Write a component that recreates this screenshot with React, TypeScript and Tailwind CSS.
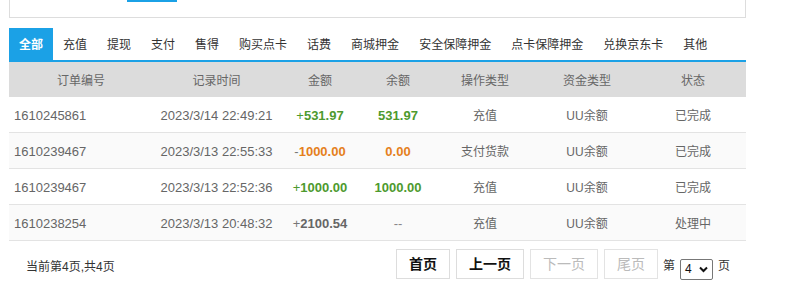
import React from "react";

type Row = {
  id: string;
  time: string;
  amount: string;
  balance: string;
  op: string;
  fund: string;
  status: string;
  tone: "up" | "down" | "none";
};

const tabs = ["全部", "充值", "提现", "支付", "售得", "购买点卡", "话费", "商城押金", "安全保障押金", "点卡保障押金", "兑换京东卡", "其他"];

const rows: Row[] = [
  { id: "1610245861", time: "2023/3/14 22:49:21", amount: "531.97", balance: "531.97", op: "充值", fund: "UU余额", status: "已完成", tone: "up" },
  { id: "1610239467", time: "2023/3/13 22:55:33", amount: "1000.00", balance: "0.00", op: "支付货款", fund: "UU余额", status: "已完成", tone: "down" },
  { id: "1610239467", time: "2023/3/13 22:52:36", amount: "1000.00", balance: "1000.00", op: "充值", fund: "UU余额", status: "已完成", tone: "up" },
  { id: "1610238254", time: "2023/3/13 20:48:32", amount: "2100.54", balance: "--", op: "充值", fund: "UU余额", status: "处理中", tone: "none" },
];

const cols = ["w-[144px]", "w-[127px]", "w-[80px]", "w-[76px]", "w-[98px]", "w-[106px]", "w-[106px]"];

function Amount({ r }: { r: Row }) {
  if (r.tone === "up")
    return (
      <span>
        <span className="text-[#4d9a2e]">+</span>
        <span className="font-bold text-[#4d9a2e]">{r.amount}</span>
      </span>
    );
  if (r.tone === "down")
    return (
      <span>
        <span className="text-[#777]">-</span>
        <span className="font-bold text-[#e5801c]">{r.amount}</span>
      </span>
    );
  return (
    <span>
      <span className="text-[#777]">+</span>
      <span className="font-bold text-[#666]">{r.amount}</span>
    </span>
  );
}

function Balance({ r }: { r: Row }) {
  if (r.tone === "up") return <span className="font-bold text-[#4d9a2e]">{r.balance}</span>;
  if (r.tone === "down") return <span className="font-bold text-[#e5801c]">{r.balance}</span>;
  return <span className="text-[#888]">{r.balance}</span>;
}

export default function App() {
  return (
    <div className="h-[300px] w-[798px] overflow-hidden bg-white font-['Liberation_Sans','Noto_Sans_CJK_SC',sans-serif]">
      <div className="ml-[9px] w-[737px]">
        {/* search box, only the bottom peeks in */}
        <div className="h-[18px] border-x border-b border-[#dddddd]">
          <div className="ml-[117px] h-[2px] w-[50px] bg-[#1ba1e6]" />
        </div>

        {/* tabs */}
        <div className="mt-[10px] flex h-[32px] items-stretch">
          {tabs.map((t, i) => (
            <div
              key={t}
              className={`flex items-center px-[10px] pt-[1px] text-[12px] ${i === 0 ? "bg-[#1ba1e6] font-bold text-white" : "text-[#333]"}`}
            >
              {t}
            </div>
          ))}
        </div>
        <div className="h-[2px] bg-[#1ba1e6]" />

        {/* table */}
        <div className="flex h-[35px] items-center bg-[#dcdcdc] pt-[2px] text-[12px] text-[#666]">
          {["订单编号", "记录时间", "金额", "余额", "操作类型", "资金类型", "状态"].map((h, i) => (
            <div key={h} className={`${cols[i]} text-center`}>{h}</div>
          ))}
        </div>
        {rows.map((r, idx) => (
          <div
            key={idx}
            className={`flex h-[36px] items-center border-b border-[#e3e3e3] pt-[2px] text-[12px] text-[#666] ${idx % 2 === 1 ? "bg-[#fafafa]" : "bg-white"}`}
          >
            <div className={`${cols[0]} pl-[5px] text-[13px]`}>{r.id}</div>
            <div className={`${cols[1]} text-center text-[13px]`}>{r.time}</div>
            <div className={`${cols[2]} text-center text-[13px]`}><Amount r={r} /></div>
            <div className={`${cols[3]} text-center text-[13px]`}><Balance r={r} /></div>
            <div className={`${cols[4]} text-center`}>{r.op}</div>
            <div className={`${cols[5]} text-center`}>{r.fund}</div>
            <div className={`${cols[6]} text-center`}>{r.status}</div>
          </div>
        ))}

        {/* pager */}
        <div className="mt-[8px] flex h-[30px] items-center">
          <div className="ml-[17px] pt-[6px] text-[12px] text-[#333]">当前第4页,共4页</div>
          <div className="ml-auto flex items-center gap-[6px]">
            <button className="h-[30px] border border-[#dddddd] bg-white px-[12px] text-[14px] font-bold text-[#111]">首页</button>
            <button className="h-[30px] border border-[#dddddd] bg-white px-[12px] text-[14px] font-bold text-[#111]">上一页</button>
            <button className="h-[30px] border border-[#e3e3e3] bg-white px-[12px] text-[14px] text-[#bbb]" disabled>下一页</button>
            <button className="h-[30px] border border-[#e3e3e3] bg-white px-[12px] text-[14px] text-[#bbb]" disabled>尾页</button>
            <div className="ml-[-1px] flex items-center gap-[5px] pt-[4px]">
              <span className="text-[12px] text-[#333]">第</span>
              <div className="mt-[6px] flex h-[21px] w-[33px] items-center justify-between rounded-[2px] border border-[#777] px-[4px] text-[12px] text-[#111]">
                <span>4</span>
                <svg width="9" height="7" viewBox="0 0 9 7"><path d="M1 1.5 L4.5 5 L8 1.5" stroke="#111" strokeWidth="2" fill="none" /></svg>
              </div>
              <span className="mr-[16px] text-[12px] text-[#333]">页</span>
            </div>
          </div>
        </div>
      </div>
    </div>
  );
}
